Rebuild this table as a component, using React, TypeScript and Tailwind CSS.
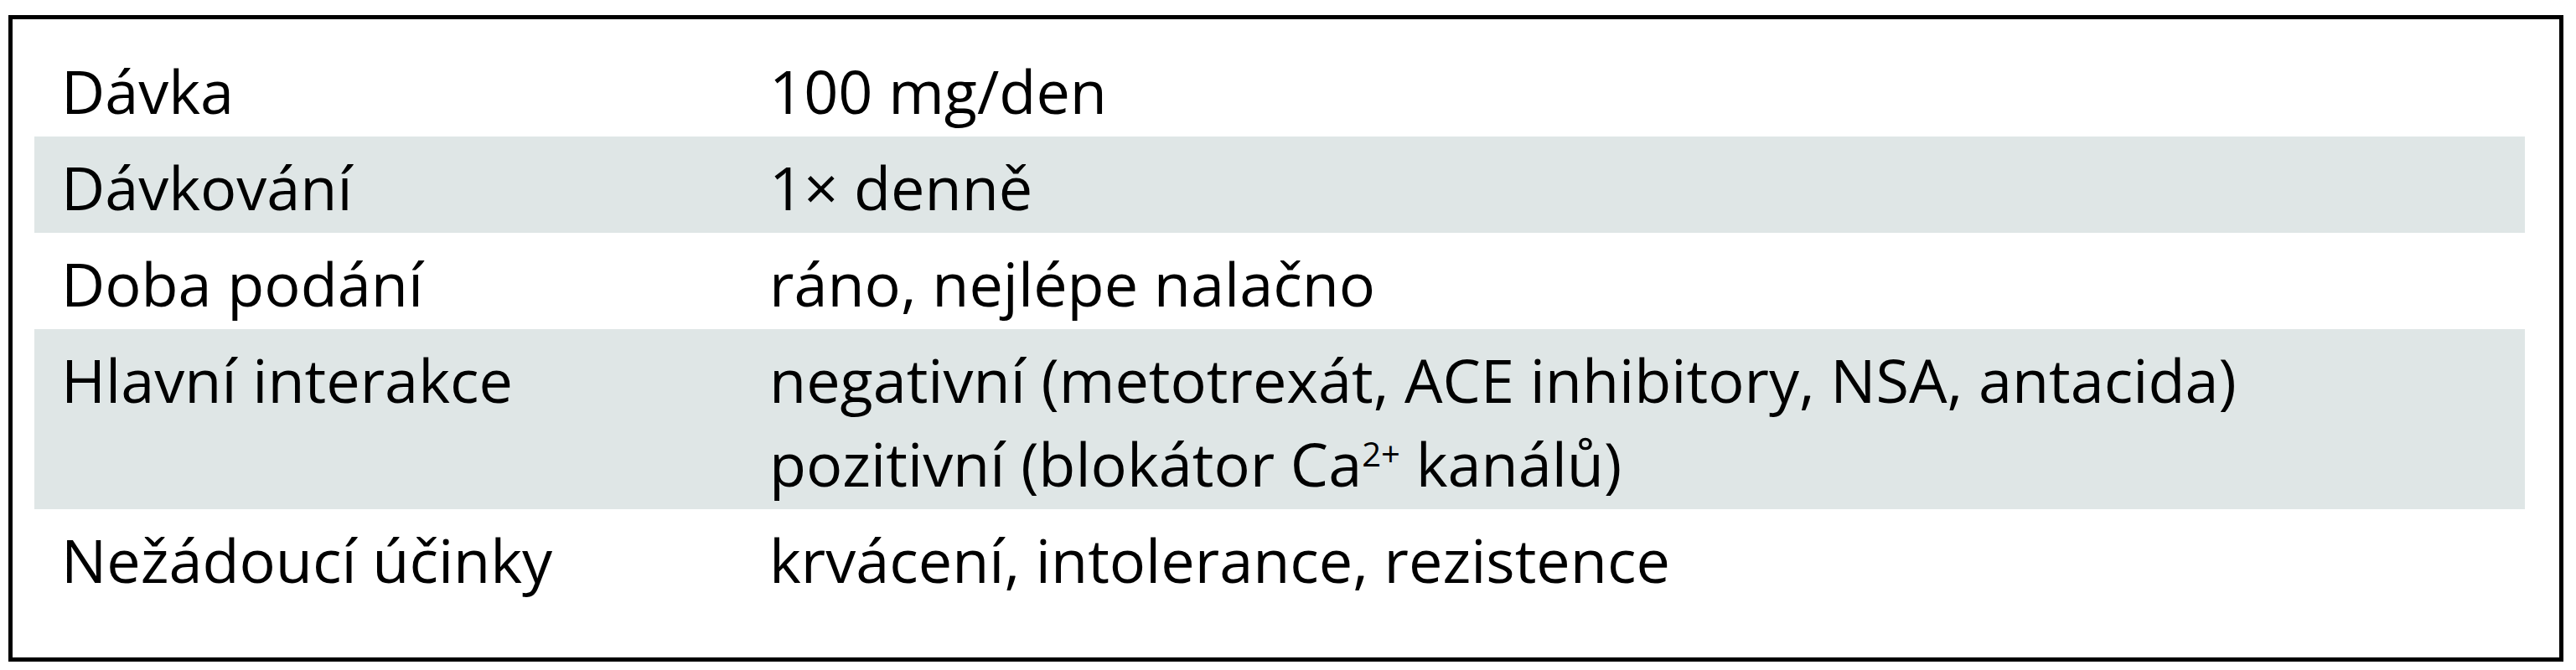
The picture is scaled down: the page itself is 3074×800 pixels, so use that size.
import React from "react";

const rows: { label: string; value: React.ReactNode; gray: boolean }[] = [
  { label: "Dávka", value: "100 mg/den", gray: false },
  { label: "Dávkování", value: "1× denně", gray: true },
  { label: "Doba podání", value: "ráno, nejlépe nalačno", gray: false },
  {
    label: "Hlavní interakce",
    value: (
      <>
        <div>negativní (metotrexát, ACE inhibitory, NSA, antacida)</div>
        <div>
          pozitivní (blokátor Ca
          <span className="text-[40px] relative top-[-24px] align-baseline leading-none">2+</span> kanálů)
        </div>
      </>
    ),
    gray: true,
  },
  { label: "Nežádoucí účinky", value: "krvácení, intolerance, rezistence", gray: false },
];

export default function App() {
  return (
    <div className="w-[3074px] h-[800px] bg-white pt-[18px] pl-[10px]" style={{ fontFamily: '"Open Sans", "Noto Sans", sans-serif' }}>
      <div className="w-[3049px] h-[772px] border-[5px] border-black pl-[26px] pr-[41px] pt-[25px] text-black text-[72px]">
        {rows.map((r) => (
          <div key={r.label} className={`flex pt-[10px] pb-[5px] leading-[100px] ${r.gray ? "bg-[#dfe6e6]" : "bg-white"}`}>
            <div className="w-[877px] shrink-0 pl-[32px]">{r.label}</div>
            <div className="flex-1">{r.value}</div>
          </div>
        ))}
      </div>
    </div>
  );
}
